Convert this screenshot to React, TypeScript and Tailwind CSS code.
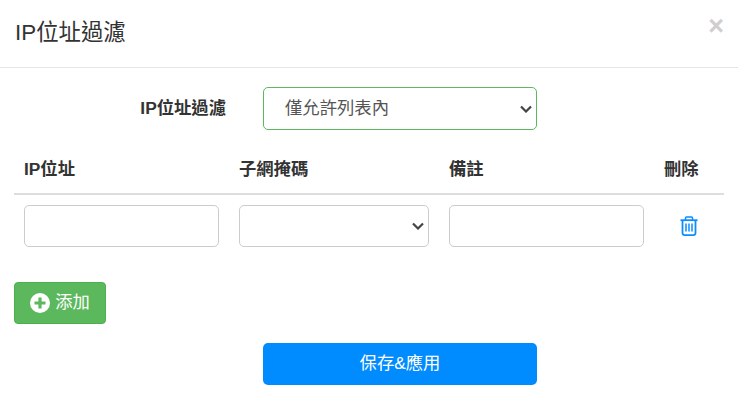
const font = "font-['Liberation_Sans','Noto_Sans_CJK_TC',sans-serif]";

const TrashIcon = () => (
  <svg width="18" height="20" viewBox="0 0 18 20" fill="none" stroke="#0a8dff" strokeWidth="1.800">
    <path d="M0.500 4.200h17" />
    <path d="M5.500 4V2a1 1 0 0 1 1-1h5a1 1 0 0 1 1 1v2" strokeWidth="1.500" />
    <path d="M2.500 4.500v12.500a2.200 2.200 0 0 0 2.200 2.100h8.600a2.200 2.200 0 0 0 2.200-2.100v-12.500" />
    <path d="M6 7.500v8M9 7.500v8M12 7.500v8" strokeWidth="1.500" />
  </svg>
);

const PlusCircle = () => (
  <svg width="20" height="20" viewBox="0 0 20 20">
    <circle cx="10" cy="10" r="10" fill="#fff" />
    <path d="M10 4.500v11M4.500 10h11" stroke="#5cb85c" strokeWidth="3.200" />
  </svg>
);

const Chevron = () => (
  <svg
    width="12"
    height="8"
    viewBox="0 0 12 8"
    fill="none"
    stroke="#444"
    strokeWidth="2.200"
    className="pointer-events-none absolute right-[5px] top-1/2 -translate-y-1/2"
  >
    <path d="M1 1.500l5 5 5-5" />
  </svg>
);

const inputClass = "h-[42px] w-full rounded-[5px] border border-[#ccc] bg-white";

export default function App() {
  return (
    <div className={`${font} h-[420px] w-[738px] overflow-hidden bg-white text-[#333]`}>
      {/* Header */}
      <div className="relative flex h-[68px] items-center border-b border-[#e5e5e5] pb-[1px] pl-[15px]">
        <h4 className="text-[22.400px] font-normal leading-none">IP位址過濾</h4>
        <span className="absolute right-[14px] top-[11px] text-[27px] font-bold leading-[30px] text-[#cfcfcf]">×</span>
      </div>

      {/* Mode */}
      <div className="mt-[19px] flex items-center">
        <label className="w-[226px] pt-[1px] text-right text-[17.330px] font-bold">IP位址過濾</label>
        <div className="relative ml-[37px] w-[274px]">
          <select
            defaultValue="allow"
            className="block h-[43px] w-full appearance-none rounded-[5px] border border-[#5cb85c] bg-white pl-[21px] text-[17.330px] text-[#555]"
          >
            <option value="allow">僅允許列表內</option>
          </select>
          <Chevron />
        </div>
      </div>

      {/* Table */}
      <div className="mx-[14px] mt-[20px]">
        <div className="grid h-[45px] grid-cols-[215px_210px_215px_60px] items-center border-b-2 border-[#ddd] pb-[3px] pl-[10px] text-[17.330px] font-bold">
          <span>IP位址</span>
          <span>子網掩碼</span>
          <span>備註</span>
          <span>刪除</span>
        </div>
        <div className="grid grid-cols-[215px_210px_215px_60px] items-center pl-[10px] pt-[10px]">
          <div className="w-[215px] pr-[20px]">
            <input className={inputClass} />
          </div>
          <div className="w-[210px] pr-[20px]">
            <div className="relative">
              <select className={`${inputClass} block appearance-none text-[16px]`} defaultValue="">
                <option value=""></option>
              </select>
              <Chevron />
            </div>
          </div>
          <div className="w-[215px] pr-[20px]">
            <input className={inputClass} />
          </div>
          <div className="flex justify-center pr-[10px]">
            <TrashIcon />
          </div>
        </div>
      </div>

      {/* Add */}
      <div className="ml-[14px] mt-[35px]">
        <button className="flex h-[42px] w-[92px] items-center justify-center gap-[5px] rounded-[4px] border border-[#4cae4c] bg-[#5cb85c] text-[17.330px] text-white">
          <PlusCircle />
          添加
        </button>
      </div>

      {/* Save */}
      <div className="ml-[263px] mt-[19px]">
        <button className="h-[42px] w-[274px] rounded-[5px] bg-[#008cff] text-[17.330px] text-white">保存&amp;應用</button>
      </div>
    </div>
  );
}
